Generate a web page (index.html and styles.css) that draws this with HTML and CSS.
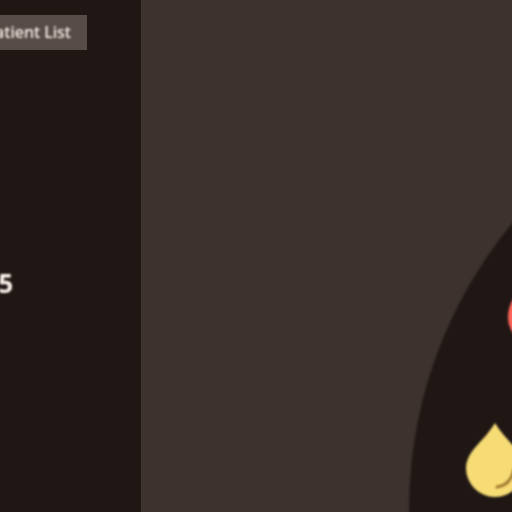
FILE: index.html
```
<!DOCTYPE html>
<html lang="en">
<head>
<meta charset="utf-8">
<title>Patient List</title>
<link rel="stylesheet" href="styles.css">
</head>
<body>
<div class="shell">
  <aside class="sidebar">
    <button class="list-button" type="button"><span class="soft">Patient List</span></button>
    <p class="count soft">5</p>
  </aside>
  <main class="stage">
    <svg class="dial soft" viewBox="0 0 371 512" aria-hidden="true">
      <circle cx="718" cy="510" r="450" fill="#201715"/>
      <path d="M396 272C384 284 367 298 367 317A29 29 0 0 0 425 317C425 298 408 284 396 272Z" fill="#ff6459"/>
      <path d="M354 423C347 435 337 443 330 453C327 458 325 462 325 468A29 29 0 0 0 383 468C383 462 381 458 378 453C371 443 361 435 354 423Z" fill="#f7dc75"/>
      <path d="M356 487Q370 485 373 469" fill="none" stroke="#a0782f" stroke-width="3" stroke-linecap="round"/>
    </svg>
  </main>
</div>
</body>
</html>
```
FILE: styles.css
```
body {
  margin: 0;
  background: #201715;
  color: #fff5ee;
  font-family: "Noto Sans", "Open Sans", sans-serif;
}

.shell {
  display: flex;
  min-height: 100vh;
  overflow: hidden;
}

.sidebar {
  box-sizing: border-box;
  display: flex;
  flex: 0 0 141px;
  flex-direction: column;
  align-items: flex-end;
  min-width: 0;
  padding-top: 15px;
  background: #201715;
}

.list-button {
  flex: none;
  height: 35px;
  margin: 0 54px 0 0;
  padding: 0 16px 2px;
  border: 0;
  background: #574b47;
  color: inherit;
  font: 500 16px/20px "Noto Sans", "Open Sans", sans-serif;
  white-space: nowrap;
}

.list-button .soft {
  display: block;
}

.soft {
  filter: blur(1px);
}

.count {
  margin: 215px 128px 0 0;
  font-size: 26px;
  font-weight: 700;
  line-height: 36px;
}

.stage {
  position: relative;
  flex: 1;
  min-width: 0;
  overflow: hidden;
  background: #3d322e;
}

.dial {
  position: absolute;
  right: 0;
  bottom: 0;
  width: 100%;
  overflow: visible;
}
```
